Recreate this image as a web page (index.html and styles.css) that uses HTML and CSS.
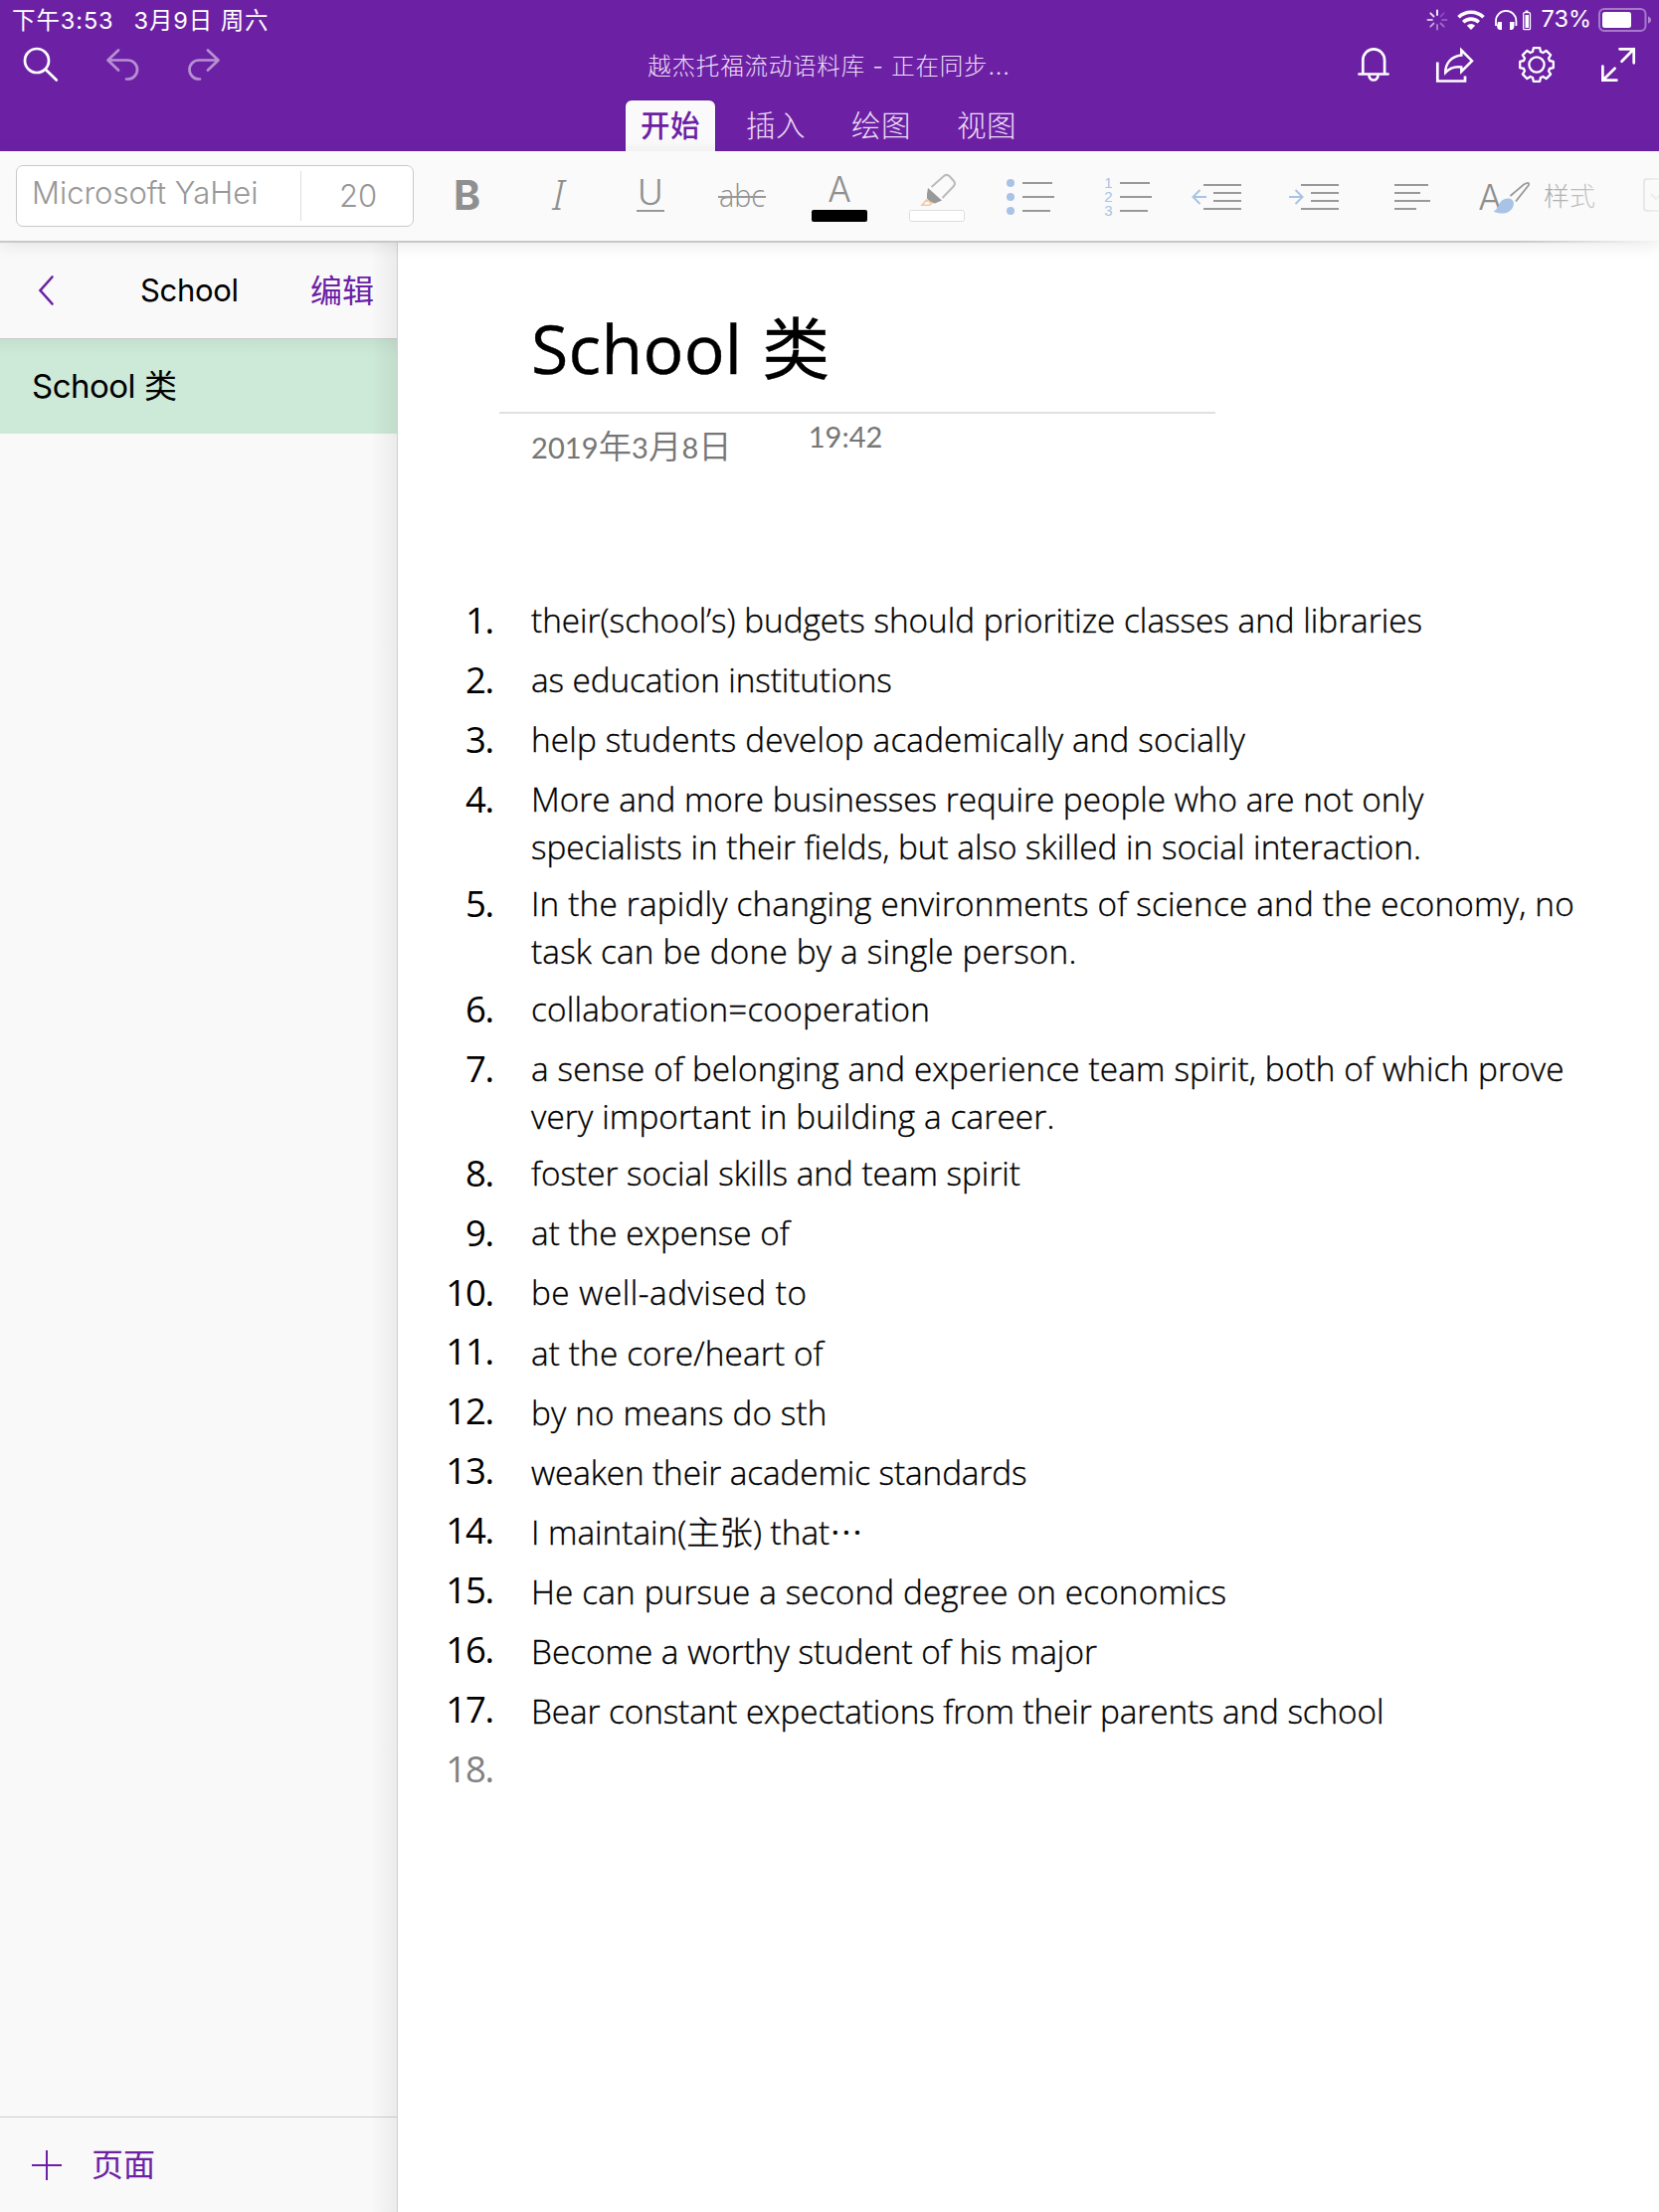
FILE: index.html
```html
<!DOCTYPE html>
<html lang="zh-CN">
<head>
<meta charset="utf-8">
<title>School 类</title>
<link rel="stylesheet" href="styles.css">
</head>
<body>
<header class="topbar">
  <div class="status">
    <span class="clock">下午3:53</span><span class="date">3月9日 周六</span>
    <svg class="status-icons" width="108" height="40" viewBox="1434 0 108 40" fill="none" stroke="#fff" stroke-width="1.8">
      <g stroke-linecap="round"><path d="M1445 10.500v4.500"/><path d="M1451.700 13.300l-3.200 3.200" opacity=".2"/><path d="M1454.500 20h-4.500" opacity=".25"/><path d="M1451.700 26.700l-3.200-3.200" opacity=".35"/><path d="M1445 29.500v-4.500" opacity=".45"/><path d="M1438.300 26.700l3.200-3.200" opacity=".6"/><path d="M1435.500 20h4.500" opacity=".7"/><path d="M1438.300 13.300l3.200 3.200" opacity=".85"/></g>
      <g stroke-width="3.6"><path d="M1466.500 17.300a18 18 0 0 1 25 0"/><path d="M1471.200 22.200a11.300 11.300 0 0 1 15.600 0"/></g>
      <path d="M1479 30l-4.200-4.200a6 6 0 0 1 8.400 0z" fill="#fff" stroke="none"/>
      <path d="M1504 26v-5a10.200 10.200 0 0 1 20.400 0v5"/>
      <path d="M1506 22h4v8h-2.500q-2.500-1-2.500-4zM1518 22h4.500v4q0 3-2.500 4h-2z" fill="#fff" stroke="none"/>
      <rect x="1531.700" y="12.700" width="6.800" height="17" rx="1" stroke-width="1.300"/><path d="M1533.500 15h3.500v13h-3.500zM1533.500 10.500h3v1.500h-3z" fill="#fff" stroke="none"/>
    </svg>
    <span class="percent">73%</span>
    <svg width="56" height="40" viewBox="1604 0 56 40" fill="#fff"><rect x="1606" y="9" width="46.500" height="22" rx="5" fill="none" stroke="#fff" stroke-opacity=".4" stroke-width="2"/><rect x="1609" y="12" width="29" height="16" rx="2.500"/><path d="M1655 16.500q3 1 3 3.500t-3 3.500z" opacity=".45"/></svg>
  </div>
  <div class="nav">
    <svg width="240" height="50" viewBox="0 40 240 50" fill="none" stroke="#fff" stroke-width="2.700" stroke-linecap="round" stroke-linejoin="round">
      <circle cx="37" cy="61" r="12"/><path d="M46 70l10.800 10.500"/>
      <g opacity=".5"><path d="M119 50.500l-10.500 10 10.500 10M108.500 60.500H128.500a9.500 9.500 0 0 1 0 19h-1.500"/><path d="M209 50.500l10.500 10-10.500 10M219.500 60.500H200a9.500 9.500 0 0 0 0 19h1"/></g>
    </svg>
    <span class="doc-title">越杰托福流动语料库 - 正在同步...</span>
    <svg width="308" height="50" viewBox="1360 40 308 50" fill="none" stroke="#fff" stroke-width="2.700">
      <path d="M1370.300 74V60.500a10.800 11 0 0 1 21.800 0V74M1376.500 75.500a4.500 5 0 0 0 9 0"/><path d="M1366.500 74.500h29" stroke-linecap="round"/>
      <path d="M1445.300 62.500V81.500H1473V76.500"/><path d="M1469.300 50.500L1480 61.200 1469.300 72V67.500C1462 66.500 1457 69 1453.300 73 1453 64 1459 56.500 1469.300 55.500Z" stroke-width="2.500"/>
      <g transform="translate(1545 65)" stroke-width="2.300"><path stroke-linejoin="round" d="M-4-13L-3.200-16.800H3.200L4-13 6.400-12 9.600-14.100 14.100-9.600 12-6.400 13-4 16.800-3.200V3.200L13 4 12 6.400 14.100 9.600 9.600 14.100 6.400 12 4 13 3.200 16.800H-3.200L-4 13-6.400 12-9.600 14.100-14.100 9.600-12 6.400-13 4-16.800 3.200V-3.200L-13-4-12-6.400-14.100-9.600-9.600-14.100-6.400-12Z"/><circle r="7.600"/></g>
      <g stroke-linecap="round"><path d="M1628.500 49.300h14.200v14M1642.700 49.300l-12.200 12.500M1611.400 66.500v14.200h14M1611.400 80.700l12.200-12"/></g>
    </svg>
  </div>
  <nav class="tabs"><span class="tab active">开始</span><span class="tab">插入</span><span class="tab">绘图</span><span class="tab">视图</span></nav>
</header>

<div class="toolbar">
  <div class="fontbox"><span class="fontname">Microsoft YaHei</span><span class="fontsize">20</span></div>
  <svg class="tools" width="1244" height="90" viewBox="424 152 1244 90" fill="none" stroke="#999" stroke-width="2">
    <g class="glyph">
      <text x="456" y="211" class="t-bold">B</text>
      <text x="555" y="211" class="t-italic">I</text>
      <text x="654" y="206" class="t-thin mid">U</text>
      <text x="746" y="207.500" class="t-abc mid" textLength="46" lengthAdjust="spacingAndGlyphs">abc</text>
      <text x="844" y="203" class="t-thin mid">A</text>
      <text x="1498" y="211" class="t-thin mid">A</text>
    </g>
    <path d="M640 212h28M722 198h48"/>
    <rect x="816" y="211" width="56" height="12" rx="2" fill="#000" stroke="none"/>
    <rect x="914.500" y="211.500" width="55" height="11" rx="2" fill="#fff" stroke="#ddd" stroke-width="1"/>
    <path d="M936.500 188L949 177q3-2.500 6 .500l4 4.500q2 2.500 0 5L947.500 199" stroke="#bbb"/>
    <path d="M933 189L947 201.500 940 204.500 936 203.500 932 199.500 932 195z" fill="#999" stroke="none"/>
    <path d="M931.500 201l-4.500 5.200h7.500l2.500-2z" stroke="#f3c9a4" stroke-width="1.600"/>
    <g fill="#a9c3e6" stroke="none"><circle cx="1016" cy="184" r="4"/><circle cx="1016" cy="198" r="4"/><circle cx="1016" cy="212" r="4"/></g>
    <path d="M1028 184h30M1028 198h32M1028 212h28M1126 184h30M1126 198h32M1126 212h28"/>
    <g class="digits"><text x="1114.500" y="189">1</text><text x="1114.500" y="203">2</text><text x="1114.500" y="217">3</text></g>
    <path d="M1210 186h38M1220 194h28M1220 202h28M1210 210h38M1308 186h38M1318 194h28M1318 202h28M1308 210h38M1402 186h34M1402 194h26M1402 202h36M1402 210h22"/>
    <path d="M1213 198h-14M1206.500 191l-7 7 7 7M1296 198h14M1302.500 191l7 7-7 7" stroke="#a9c3e6"/>
    <path d="M1501.500 212.500C1507 210 1506 205 1510 201.500 1515 198 1522 199 1522 205 1521 214 1511 217 1501.500 212.500Z" fill="#a9c3e6" stroke="none"/>
    <path d="M1518.500 197L1532 185.500Q1538 182 1537 186L1524 202.500" stroke="#999" stroke-width="1.800"/>
    <text x="1552" y="206.500" class="t-style">样式</text>
    <path d="M1668 180h-12q-3 0-3 3v26q0 3 3 3h12M1660 195l5 5 5-5" stroke="#999"/>
  </svg>
</div>

<div class="workspace">
  <aside class="sidebar">
    <div class="side-head">
      <svg width="20" height="34" viewBox="36 275 20 34" fill="none" stroke="#6c21a5" stroke-width="2.600" stroke-linecap="round"><path d="M52.500 278.500L40.500 292l12 13.500"/></svg>
      <span class="side-title">School</span><span class="edit">编辑</span>
    </div>
    <div class="page-item"><span>School</span> <span class="cjk">类</span></div>
    <div class="side-foot"><svg width="30" height="30" viewBox="0 0 30 30" stroke="#6c21a5" stroke-width="2"><path d="M15 0v30M0 15h30"/></svg><span>页面</span></div>
  </aside>
  <main class="page">
    <h1><span>School</span><span class="kind">类</span></h1>
    <div class="stamp"><span class="day">2019<i>年</i>3<i>月</i>8<i>日</i></span><span class="time">19:42</span></div>
    <ol class="notes">
      <li><b>1.</b><p>their(school’s) budgets should prioritize classes and libraries</p></li>
      <li class="snug"><b>2.</b><p>as education institutions</p></li>
      <li class="wide"><b>3.</b><p>help students develop academically and socially</p></li>
      <li class="two"><b>4.</b><p>More and more businesses require people who are not only<br>specialists in their fields, but also skilled in social interaction.</p></li>
      <li class="two wider"><b>5.</b><p>In the rapidly changing environments of science and the economy, no<br>task can be done by a single person.</p></li>
      <li class="wider"><b>6.</b><p>collaboration=cooperation</p></li>
      <li class="two wide"><b>7.</b><p>a sense of belonging and experience team spirit, both of which prove<br>very important in building a career.</p></li>
      <li><b>8.</b><p>foster social skills and team spirit</p></li>
      <li><b>9.</b><p>at the expense of</p></li>
      <li class="widest"><b>10.</b><p>be well-advised to</p></li>
      <li class="low wide"><b>11.</b><p>at the core/heart of</p></li>
      <li class="low wide"><b>12.</b><p>by no means do sth</p></li>
      <li class="low snug"><b>13.</b><p>weaken their academic standards</p></li>
      <li class="low"><b>14.</b><p>I maintain(主张) that⋯</p></li>
      <li class="low wide"><b>15.</b><p>He can pursue a second degree on economics</p></li>
      <li class="low"><b>16.</b><p>Become a worthy student of his major</p></li>
      <li class="low snug"><b>17.</b><p>Bear constant expectations from their parents and school</p></li>
      <li class="empty"><b>18.</b><p></p></li>
    </ol>
  </main>
</div>
</body>
</html>
```
FILE: styles.css
```css
* { box-sizing: border-box; }
body { margin: 0; width: 1668px; height: 2224px; overflow: hidden; background: #fff; color: #000; display: flex; flex-direction: column; font-family: Inter, "Noto Sans CJK SC", sans-serif; }
svg { display: block; flex: none; }

.topbar { height: 152px; background: #6c21a5; color: #fff; }
.status { height: 40px; display: flex; align-items: center; padding: 0 6px 0 12px; font-size: 23.5px; letter-spacing: .9px; white-space: nowrap; }
.status span { padding-bottom: 3px; }
.date { margin-left: 20px; }
.status-icons { margin-left: auto; }
.percent { margin: 0 6px 0 8px; letter-spacing: 0; }
.nav { height: 50px; display: flex; justify-content: space-between; align-items: center; }
.doc-title { margin-left: 67px; padding-bottom: 1px; font-size: 23.5px; letter-spacing: .8px; font-weight: 300; color: #eddff5; }
.tabs { height: 62px; padding: 11px 0 0 629px; display: flex; gap: 16px; }
.tab { width: 90px; height: 51px; line-height: 51px; text-align: center; font-size: 29.5px; letter-spacing: .6px; font-weight: 300; color: #eddff5; }
.tab.active { background: #fafafa; color: #6c21a5; font-weight: 500; border-radius: 6px 6px 0 0; box-shadow: 0 0 2px #4a1475; clip-path: inset(-3px -3px 0 -3px); }

.toolbar { position: relative; z-index: 1; height: 92px; flex: none; display: flex; padding-left: 16px; gap: 8px; background: #fafafa; border-bottom: 2px solid #c8c8c8; box-shadow: 0 2px 16px rgba(0,0,0,.09); }
.toolbar::after { content: ""; position: absolute; right: 0; top: 0; width: 140px; height: 92px; background: linear-gradient(90deg, rgba(250,250,250,0), rgba(250,250,250,.9)); }
.fontbox { width: 400px; height: 62px; margin-top: 14px; background: #fff; border: 1px solid #c9c9c9; border-radius: 7px; display: flex; align-items: center; font-size: 31px; font-weight: 300; color: #989898; }
.fontname { width: 286px; height: 50px; padding-left: 15px; line-height: 44px; border-right: 1px solid #ddd; white-space: nowrap; }
.fontsize { flex: 1; text-align: center; padding: 0 0 1px 2px; }
.glyph text { fill: #8f8f8f; stroke: none; }
.mid { text-anchor: middle; }
.t-bold { font: 700 41px Inter, sans-serif; }
.t-italic { font: italic 300 42px "Noto Sans", sans-serif; }
.t-thin { font: 300 35px Inter, sans-serif; }
.t-abc { font: 300 32px "Open Sans", sans-serif; }
.digits text { font: 400 15px "Liberation Sans", sans-serif; fill: #a9c3e6; stroke: none; text-anchor: middle; }
.t-style { font: 300 26px "Noto Sans CJK SC", sans-serif; fill: #999; stroke: none; }

.workspace { flex: 1; display: flex; min-height: 0; }
.sidebar { position: relative; width: 400px; flex: none; display: flex; flex-direction: column; background: #f9f9f9; border-right: 1px solid #cfcfcf; }
.sidebar::after { content: ""; position: absolute; right: 0; top: 0; bottom: 0; width: 26px; background: linear-gradient(90deg, rgba(0,0,0,0), rgba(0,0,0,.055)); }
.side-head { height: 97px; display: flex; align-items: center; padding: 0 23px 0 36px; border-bottom: 1px solid #c9cbca; font-size: 31px; }
.side-title { margin-left: 85px; padding-bottom: 2px; letter-spacing: -.3px; }
.edit { margin-left: auto; padding-bottom: 4px; color: #6c21a5; font-size: 32px; }
.page-item { height: 95px; line-height: 94px; padding-left: 32px; font-size: 33px; letter-spacing: -.5px; background: linear-gradient(#c5e0cf, #cde9d7 16px); }
.side-foot { margin-top: auto; height: 96px; border-top: 1px solid #cfcfcf; display: flex; align-items: center; gap: 30px; padding-left: 32px; font-size: 32px; color: #6c21a5; }
.side-foot span { padding-bottom: 6px; }

.page { flex: 1; }
h1 { margin: 0 0 0 102px; width: 720px; height: 172px; padding: 48px 0 0 32px; border-bottom: 2px solid #e0e0e0; display: flex; font: 400 68px/116px "Open Sans", "Noto Sans CJK SC", sans-serif; letter-spacing: .3px; -webkit-text-stroke: .4px; }
.kind { margin-left: 20px; font-size: 68px; }
.stamp { display: flex; gap: 77px; height: 183px; padding-left: 134px; font-family: Lato, "Noto Sans CJK SC", sans-serif; font-size: 29px; line-height: 46px; color: #767676; }
.day { padding-top: 9px; letter-spacing: .1px; }
.day i { font-style: normal; font-size: 33.300px; font-weight: 350; }
.notes { margin: 0; padding: 0; list-style: none; font: 300 33.3px/48px "Open Sans", "Noto Sans CJK SC", sans-serif; white-space: nowrap; }
.notes li { height: 60px; display: grid; grid-template-columns: 96px 1fr; column-gap: 38px; }
.notes li.two { height: 105.3px; }
.notes b { font-weight: 400; font-size: 36.500px; letter-spacing: -1.200px; text-align: right; }
.notes p { margin: 0; -webkit-text-stroke: .35px; }
.notes .snug p { letter-spacing: -.09px; }
.notes .wide p { letter-spacing: .14px; }
.notes .wider p { letter-spacing: .19px; }
.notes .widest p { letter-spacing: .52px; }
.notes .low p { padding-top: 1px; }
.notes .low b, .notes .empty b { margin-top: -1px; }
.empty b { color: #808080; }
```
